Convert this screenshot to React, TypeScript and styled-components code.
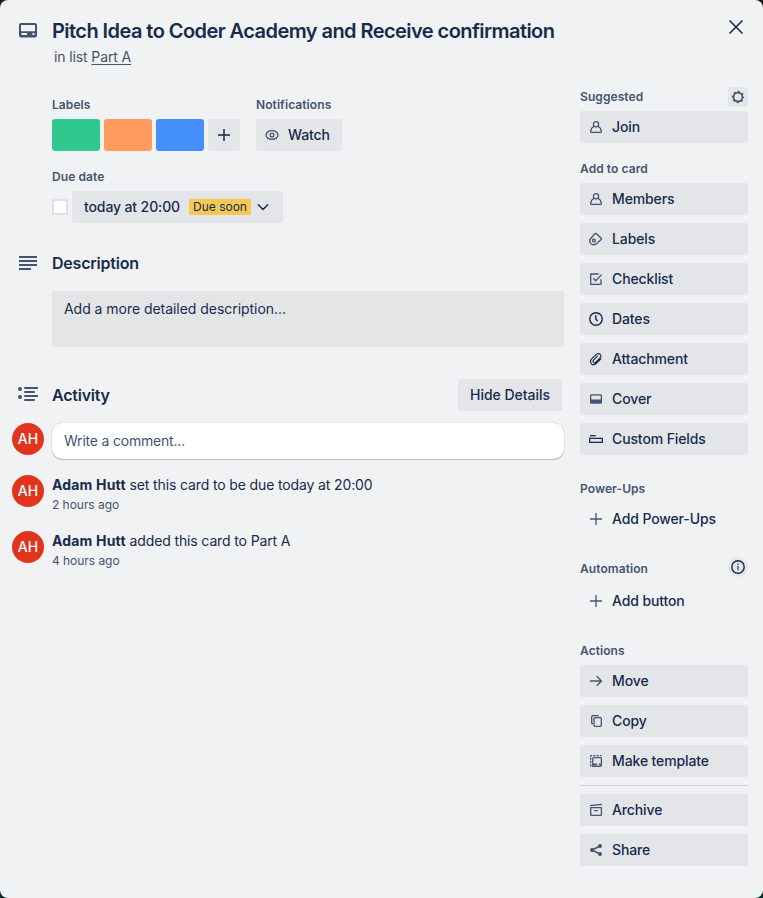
import React from 'react';
import styled, { createGlobalStyle, css } from 'styled-components';

const INK = '#172b4d';
const SUBTLE = '#44546f';

const GlobalStyle = createGlobalStyle`
  * { box-sizing: border-box; }
  html { background: #1b1b1b; }
  body {
    margin: 0;
    background: linear-gradient(#1b1b1b 50%, #05302b 50%);
    font-family: Inter, "Liberation Sans", sans-serif;
    font-size: 14px;
    line-height: 20px;
    color: ${INK};
  }
  svg { display: block; flex: none; overflow: visible; }
`;

const Dialog = styled.div`
  width: 763px;
  height: 898px;
  background: #f1f2f4;
  border-radius: 8px;
  overflow: hidden;
`;

const Header = styled.header`
  display: flex;
  align-items: flex-start;
  height: 80px;
  padding: 19px 19px 0 16px;
  color: ${SUBTLE};
`;

const HeaderText = styled.div`
  flex: 1;
  padding-left: 12px;
`;

const Title = styled.h1`
  margin: 0;
  font-size: 20px;
  font-weight: 600;
  line-height: 24px;
  letter-spacing: -0.56px;
  white-space: nowrap;
  color: ${INK};
`;

const Location = styled.p`
  margin: 4px 0 0 2px;
  letter-spacing: -0.12px;
`;

const ListLink = styled.a`
  text-decoration: underline;
  text-underline-offset: 2px;
`;

const CloseButton = styled.button`
  display: flex;
  border: 0;
  padding: 0;
  background: none;
  color: ${INK};
`;

const Columns = styled.div`
  display: grid;
  grid-template-columns: 552px 168px;
  column-gap: 16px;
  padding-left: 12px;
`;

const Main = styled.main`
  padding-top: 15px;
`;

const Details = styled.div`
  padding-left: 40px;
`;

const FieldRow = styled.div`
  display: flex;
  gap: 16px;
  margin-bottom: 16px;
`;

const FieldTitle = styled.h3`
  margin: 0 0 4px;
  font-size: 12px;
  font-weight: 600;
  line-height: 20px;
  letter-spacing: 0.08px;
  color: ${SUBTLE};
`;

const Inline = styled.div`
  display: flex;
  align-items: center;
  gap: 4px;
`;

const LabelChip = styled.span<{ $color: string }>`
  width: 48px;
  height: 32px;
  border-radius: 3px;
  background: ${(p) => p.$color};
`;

const buttonBase = css`
  display: flex;
  align-items: center;
  height: 32px;
  border: 0;
  border-radius: 3px;
  background: #e3e5e8;
  color: ${INK};
  font: 500 14px/20px Inter, "Liberation Sans", sans-serif;
  letter-spacing: -0.12px;
  white-space: nowrap;
`;

const AddLabel = styled.button`
  ${buttonBase}
  width: 32px;
  padding: 0;
  justify-content: center;
`;

const WatchButton = styled.button`
  ${buttonBase}
  width: 86px;
  padding: 0 8px;
  gap: 8px;
`;

const Checkbox = styled.span`
  width: 16px;
  height: 16px;
  border: 2px solid #dfe1e6;
  border-radius: 2px;
  background: #fff;
`;

const DueButton = styled.button`
  ${buttonBase}
  width: 211px;
  padding: 0 12px;
`;

const DueBadge = styled.span`
  height: 16px;
  width: 62px;
  margin: 0 4px 0 auto;
  border-radius: 2px;
  background: #f5c951;
  font-size: 12px;
  line-height: 16px;
  font-weight: 400;
  letter-spacing: 0;
  text-align: center;
`;

const SectionHeader = styled.div<{ $top: number }>`
  display: flex;
  align-items: center;
  height: 32px;
  margin: ${(p) => p.$top}px 0 12px;
  padding: 0 2px 0 4px;
`;

const SectionTitle = styled.h2`
  flex: 1;
  margin: 0 0 0 12px;
  font-size: 16px;
  font-weight: 600;
  line-height: 20px;
  letter-spacing: -0.22px;
  color: ${INK};
`;

const HideButton = styled.button`
  ${buttonBase}
  width: 104px;
  padding: 0;
  justify-content: center;
  letter-spacing: -0.04px;
`;

const DescriptionBox = styled.div`
  height: 56px;
  margin-left: 40px;
  padding: 8px 12px;
  border-radius: 3px;
  background: #e4e5e7;
  letter-spacing: -0.04px;
`;

const FeedRow = styled.div<{ $height: number }>`
  display: flex;
  gap: 8px;
  height: ${(p) => p.$height}px;
`;

const Avatar = styled.span`
  flex: none;
  width: 32px;
  height: 32px;
  border-radius: 50%;
  background: #e2341d;
  color: #fff;
  font-weight: 500;
  line-height: 32px;
  text-align: center;
`;

const CommentBox = styled.div`
  flex: 1;
  height: 36px;
  padding: 8px 12px;
  border-radius: 10px;
  background: #fff;
  color: ${SUBTLE};
  letter-spacing: -0.2px;
  box-shadow: 0 1px 1px #091e4240, 0 0 1px #091e424f;
`;

const Entry = styled.div`
  letter-spacing: -0.13px;
`;

const Author = styled.strong`
  font-weight: 700;
  letter-spacing: 0.18px;
`;

const Time = styled.div`
  font-size: 12px;
  letter-spacing: -0.04px;
  color: ${SUBTLE};
`;

const Sidebar = styled.aside`
  padding-top: 7px;
`;

const Group = styled.section<{ $gap: number }>`
  display: flex;
  flex-direction: column;
  gap: 8px;
  margin-bottom: ${(p) => p.$gap}px;
`;

const GroupHeader = styled.div<{ $space?: number }>`
  display: flex;
  align-items: center;
  justify-content: space-between;
  height: 20px;
  margin-bottom: ${(p) => p.$space ?? -4}px;
`;

const GroupTitle = styled.h3<{ $drop?: number }>`
  margin: 0;
  padding-top: ${(p) => p.$drop ?? 0}px;
  font-size: 12px;
  font-weight: 600;
  line-height: 20px;
  letter-spacing: 0.08px;
  color: ${SUBTLE};
`;

const ToolButton = styled.button<{ $round?: boolean }>`
  display: flex;
  align-items: center;
  justify-content: center;
  width: 20px;
  height: 20px;
  border: 0;
  padding: 0;
  border-radius: ${(p) => (p.$round ? '50%' : '4px')};
  background: #e4e6e8;
`;

const SideButton = styled.button<{ $plain?: boolean }>`
  ${buttonBase}
  width: 168px;
  padding: 0 8px;
  gap: 8px;
  background: ${(p) => (p.$plain ? 'transparent' : '#e3e5e8')};
`;

const Divider = styled.hr`
  width: 168px;
  height: 1px;
  margin: 0;
  border: 0;
  background: #cfd2d8;
`;

type SvgProps = { size?: number; stroke?: number; color?: string; children: React.ReactNode };

const Svg = ({ size = 16, stroke = 1.3, color = SUBTLE, children }: SvgProps) => (
  <svg width={size} height={size} viewBox={`0 0 ${size} ${size}`} fill="none" stroke={color} strokeWidth={stroke} strokeLinejoin="round">
    {children}
  </svg>
);

const CardIcon = () => (
  <Svg size={24}>
    <path fill={SUBTLE} stroke="none" fillRule="evenodd" d="M5 4a2 2 0 0 0-2 2v10.500a2 2 0 0 0 2 2h14a2 2 0 0 0 2-2V6a2 2 0 0 0-2-2zM5 6h14v6.200H5zM5.500 14h5.500v2H5.500zM16.500 14h2v2h-2z" />
  </Svg>
);
const DescriptionIcon = () => (
  <Svg size={24} stroke={2}><path d="M3 6h18M3 10h18M3 14h18M3 18h12" /></Svg>
);
const ActivityIcon = () => (
  <Svg size={24} stroke={2}>
    <path strokeLinecap="round" d="M9 5h12.200M9 9h9M9 13h12.200M9 17h9" />
    <circle cx="4" cy="6" r="2" fill={SUBTLE} stroke="none" />
    <circle cx="4" cy="14" r="2" fill={SUBTLE} stroke="none" />
  </Svg>
);
const CloseIcon = () => (
  <Svg stroke={1.6} color={INK}><path d="M1.500 1.500l13 13M14.500 1.500l-13 13" /></Svg>
);
const PlusIcon = ({ dark }: { dark?: boolean }) => (
  <Svg color={dark ? INK : SUBTLE} stroke={dark ? 1.5 : 1.3}><path d="M8 2v12M2 8h12" /></Svg>
);
const EyeIcon = () => (
  <Svg><ellipse cx="8" cy="8" rx="6" ry="4.400" /><circle cx="8" cy="8" r="1.900" /></Svg>
);
const ChevronIcon = () => (
  <Svg stroke={1.500} color={INK}><path strokeLinecap="round" d="M3.300 5.800L8 10.500l4.700-4.700" /></Svg>
);
const PersonIcon = () => (
  <Svg>
    <circle cx="8" cy="5.200" r="2.600" />
    <path d="M5.900 7.500C3.900 8.500 2.700 10.600 2.700 12.400Q2.700 13.300 3.600 13.300H12.400Q13.300 13.300 13.300 12.400C13.300 10.600 12.100 8.500 10.100 7.500" />
  </Svg>
);
const TagIcon = () => (
  <Svg>
    <path d="M2.900 7.200L6.900 2.700Q7.700 1.900 8.500 2.700L13.200 7.200Q13.900 7.900 13.200 8.600L8.700 12.600C6.900 14.200 4.500 14.100 3 12.600C1.500 11.100 1.400 8.800 2.900 7.200Z" />
    <circle cx="5.900" cy="9.600" r="1.400" />
  </Svg>
);
const ChecklistIcon = () => (
  <Svg><path d="M10.500 3H2.700V13.300H13V8.300M5.300 7.300L7.700 9.800L13.600 3.600" /></Svg>
);
const ClockIcon = () => (
  <Svg stroke={1.400} color={INK}><circle cx="8" cy="8" r="6.200" /><path d="M7.800 4.200V8L9.700 10" /></Svg>
);
const ClipIcon = () => (
  <Svg stroke={1.150} color={INK}>
    <path strokeLinecap="round" d="M12.700 8L8.600 12.100C6.900 13.800 4.700 14.100 3.400 12.800C2.100 11.500 2.400 9.300 4 7.700L8 3.700C9.300 2.400 11.200 2.200 12.200 3.300C13.300 4.400 13.100 6 11.900 7.200L8.100 11C7.200 11.900 6.100 12.100 5.400 11.400C4.700 10.700 4.900 9.700 5.800 8.800L9.400 5.200" />
  </Svg>
);
const CoverIcon = () => (
  <Svg>
    <path fill={SUBTLE} stroke="none" fillRule="evenodd" d="M3.300 3.200A1.300 1.300 0 0 0 2 4.500v7A1.300 1.300 0 0 0 3.300 12.800h9.400A1.300 1.300 0 0 0 14 11.500v-7A1.300 1.300 0 0 0 12.700 3.200zM3.300 4.600h9.400v4H3.300z" />
  </Svg>
);
const FieldsIcon = () => (
  <Svg stroke={1.300} color={INK}><path d="M2 4.700h5.700" /><path d="M1.700 6.500V11.300H14.300V7.300H1.700" /></Svg>
);
const GearIcon = () => (
  <Svg>
    <circle cx="8" cy="8" r="4.400" strokeWidth="1.600" />
    <circle cx="8" cy="8" r="5.500" strokeWidth="1.300" strokeDasharray="2.160 2.160" strokeDashoffset="1.080" />
  </Svg>
);
const InfoIcon = () => (
  <Svg stroke={1.400} color={INK}><circle cx="8" cy="8" r="6.200" /><path stroke={SUBTLE} d="M8 7v4.300M8 4.500v1.400" /></Svg>
);
const ArrowIcon = () => (
  <Svg><path d="M2 8h11.500M8.700 3.200L13.500 8l-4.800 4.800" /></Svg>
);
const CopyIcon = () => (
  <Svg>
    <rect x="6" y="4.700" width="7.300" height="8.600" rx="1" />
    <path d="M5 10.700H3.700V3.700Q3.700 2.700 4.700 2.700H10.700" />
  </Svg>
);
const TemplateIcon = () => (
  <Svg>
    <path strokeDasharray="2.200 1.100" d="M2.700 13.300V2.700H13.500" />
    <path d="M3.700 13.300h1" />
    <rect x="4.700" y="4.700" width="8.700" height="8.600" rx="1" />
    <path strokeWidth="2" d="M5 11.500h4M10.800 11.500h2" />
  </Svg>
);
const ArchiveIcon = () => (
  <Svg><path d="M2 3.700L14 2.300" /><rect x="2.700" y="5.700" width="10.700" height="7.700" rx="0.500" /><path d="M6.200 8.600h3.600" /></Svg>
);
const ShareIcon = () => (
  <Svg stroke={1.400}>
    <path d="M12 4L4 8l8 4" />
    <g fill={SUBTLE} stroke="none"><circle cx="4" cy="8" r="2" /><circle cx="12" cy="4" r="2" /><circle cx="12" cy="12" r="2" /></g>
  </Svg>
);

const cardActions: [string, React.ReactNode][] = [
  ['Members', <PersonIcon />],
  ['Labels', <TagIcon />],
  ['Checklist', <ChecklistIcon />],
  ['Dates', <ClockIcon />],
  ['Attachment', <ClipIcon />],
  ['Cover', <CoverIcon />],
  ['Custom Fields', <FieldsIcon />],
];

const activity = [
  { text: 'set this card to be due today at 20:00', time: '2 hours ago' },
  { text: 'added this card to Part A', time: '4 hours ago' },
];

export default function App() {
  return (
    <>
      <GlobalStyle />
      <Dialog>
        <Header>
          <CardIcon />
          <HeaderText>
            <Title>Pitch Idea to Coder Academy and Receive confirmation</Title>
            <Location>in list <ListLink>Part A</ListLink></Location>
          </HeaderText>
          <CloseButton aria-label="Close"><CloseIcon /></CloseButton>
        </Header>
        <Columns>
          <Main>
            <Details>
              <FieldRow>
                <div>
                  <FieldTitle>Labels</FieldTitle>
                  <Inline>
                    <LabelChip $color="#2fc98f" />
                    <LabelChip $color="#ff9b5e" />
                    <LabelChip $color="#458ffb" />
                    <AddLabel aria-label="Add label"><PlusIcon dark /></AddLabel>
                  </Inline>
                </div>
                <div>
                  <FieldTitle>Notifications</FieldTitle>
                  <WatchButton><EyeIcon />Watch</WatchButton>
                </div>
              </FieldRow>
              <FieldTitle>Due date</FieldTitle>
              <Inline>
                <Checkbox />
                <DueButton>today at 20:00<DueBadge>Due soon</DueBadge><ChevronIcon /></DueButton>
              </Inline>
            </Details>
            <SectionHeader $top={24}>
              <DescriptionIcon />
              <SectionTitle>Description</SectionTitle>
            </SectionHeader>
            <DescriptionBox>Add a more detailed description...</DescriptionBox>
            <SectionHeader $top={32}>
              <ActivityIcon />
              <SectionTitle>Activity</SectionTitle>
              <HideButton>Hide Details</HideButton>
            </SectionHeader>
            <FeedRow $height={52}>
              <Avatar>AH</Avatar>
              <CommentBox>Write a comment...</CommentBox>
            </FeedRow>
            {activity.map((a) => (
              <FeedRow $height={56} key={a.time}>
                <Avatar>AH</Avatar>
                <Entry>
                  <Author>Adam Hutt</Author> {a.text}
                  <Time>{a.time}</Time>
                </Entry>
              </FeedRow>
            ))}
          </Main>
          <Sidebar>
            <Group $gap={16}>
              <GroupHeader>
                <GroupTitle>Suggested</GroupTitle>
                <ToolButton aria-label="Settings"><GearIcon /></ToolButton>
              </GroupHeader>
              <SideButton><PersonIcon />Join</SideButton>
            </Group>
            <Group $gap={24}>
              <GroupHeader><GroupTitle>Add to card</GroupTitle></GroupHeader>
              {cardActions.map(([name, icon]) => <SideButton key={name}>{icon}{name}</SideButton>)}
            </Group>
            <Group $gap={22}>
              <GroupHeader><GroupTitle>Power-Ups</GroupTitle></GroupHeader>
              <SideButton $plain><PlusIcon />Add Power-Ups</SideButton>
            </Group>
            <Group $gap={24}>
              <GroupHeader $space={0}>
                <GroupTitle $drop={4}>Automation</GroupTitle>
                <ToolButton $round aria-label="About automation"><InfoIcon /></ToolButton>
              </GroupHeader>
              <SideButton $plain><PlusIcon />Add button</SideButton>
            </Group>
            <Group $gap={0}>
              <GroupHeader><GroupTitle>Actions</GroupTitle></GroupHeader>
              <SideButton><ArrowIcon />Move</SideButton>
              <SideButton><CopyIcon />Copy</SideButton>
              <SideButton><TemplateIcon />Make template</SideButton>
              <Divider />
              <SideButton><ArchiveIcon />Archive</SideButton>
              <SideButton><ShareIcon />Share</SideButton>
            </Group>
          </Sidebar>
        </Columns>
      </Dialog>
    </>
  );
}
